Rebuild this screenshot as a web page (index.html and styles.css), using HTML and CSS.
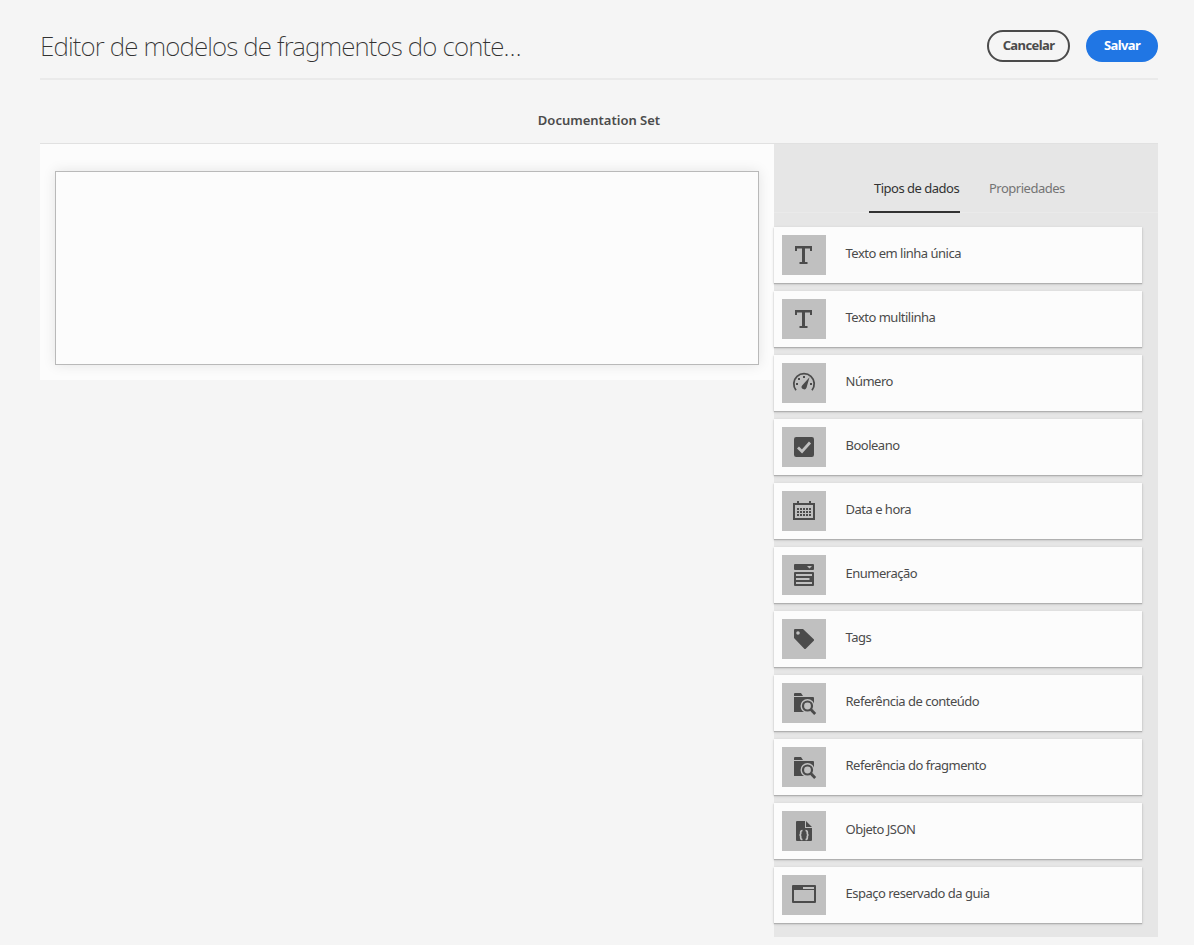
FILE: index.html
```html
<!DOCTYPE html>
<html lang="pt-BR">
<head>
<meta charset="utf-8">
<title>Editor de modelos de fragmentos do conteúdo</title>
<link rel="stylesheet" href="styles.css">
</head>
<body>
<header class="header">
  <h1 class="title">Editor de modelos de fragmentos do conte…</h1>
  <div class="actions">
    <button class="button cancel"><span>Cancelar</span></button>
    <button class="button save"><span>Salvar</span></button>
  </div>
</header>
<h2 class="model-name"><span>Documentation Set</span></h2>
<main class="editor">
  <section class="canvas"><div class="drop-zone"></div></section>
  <aside class="panel">
    <nav class="tabs">
      <a class="tab active">Tipos de dados</a>
      <a class="tab">Propriedades</a>
    </nav>
    <ul class="types">
      <li class="type"><span class="tile"><svg viewBox="0 0 44 40"><path d="M13 11h17v5h-2v-2.600h-5v13.600h2.500v2h-8v-2h2.500v-13.600h-5v2.600h-2z"/></svg></span><span class="label">Texto em linha única</span></li>
      <li class="type"><span class="tile"><svg viewBox="0 0 44 40"><path d="M13 11h17v5h-2v-2.600h-5v13.600h2.500v2h-8v-2h2.500v-13.600h-5v2.600h-2z"/></svg></span><span class="label">Texto multilinha</span></li>
      <li class="type"><span class="tile"><svg viewBox="0 0 44 40"><path class="line" d="M14 27.200A10.200 10.200 0 1 1 30 27.200"/><path d="M27.500 14.200l-3 10.500a2.500 2.500 0 1 1-4.400-2.300zM14 20h2v2h-2zM16 15h2v2h-2zM21 13h2v2h-2zM28 20h2v2h-2z"/></svg></span><span class="label">Número</span></li>
      <li class="type"><span class="tile"><svg viewBox="0 0 44 40"><rect x="12" y="10" width="20" height="20" rx="2.200"/><path class="check" d="M16 20.500l4 4 8-9"/></svg></span><span class="label">Booleano</span></li>
      <li class="type"><span class="tile"><svg viewBox="0 0 44 40"><path fill-rule="evenodd" d="M11 12h4v-2h2v2h10v-2h2v2h4v17h-22zM13 14v13h18v-13z"/><path d="M18 17h2v2h-2zM21 17h2v2h-2zM24 17h2v2h-2zM27 17h2v2h-2zM15 17h2v2h-2zM15 20h2v2h-2zM18 20h2v2h-2zM21 20h2v2h-2zM24 20h2v2h-2zM27 20h2v2h-2zM15 23h2v2h-2zM18 23h2v2h-2zM21 23h2v2h-2zM24 23h2v2h-2zM27 23h2v2h-2z"/></svg></span><span class="label">Data e hora</span></li>
      <li class="type"><span class="tile"><svg viewBox="0 0 44 40"><rect x="12" y="9" width="20" height="6" rx="1"/><rect x="12" y="17" width="20" height="14" rx="1"/><path class="cut" d="M25 11h5l-2.500 2.500zM14 19h16v2h-16zM14 23h13.500v2h-13.500zM14 27h16v2h-16z"/></svg></span><span class="label">Enumeração</span></li>
      <li class="type"><span class="tile"><svg viewBox="0 0 44 40"><path fill-rule="evenodd" d="M13 10h8l11 10.500v1L23.500 30h-1L12 19v-8a1 1 0 0 1 1-1zM16 12.200a1.800 1.800 0 1 0 0 3.600 1.800 1.800 0 0 0 0-3.600z"/></svg></span><span class="label">Tags</span></li>
      <li class="type"><span class="tile"><svg viewBox="0 0 44 40"><path d="M12 11q0-1 1-1h6l2 3h-9zM12 14h19q1 0 1 1v14h-20z"/><circle class="halo" cx="25.500" cy="23" r="5"/><path class="halo" d="M29 26.500l4.200 4.200"/><circle class="lens" cx="25.500" cy="23" r="4.500"/><path class="handle" d="M28.800 26.400l4.400 4.500"/></svg></span><span class="label">Referência de conteúdo</span></li>
      <li class="type"><span class="tile"><svg viewBox="0 0 44 40"><path d="M12 11q0-1 1-1h6l2 3h-9zM12 14h19q1 0 1 1v14h-20z"/><circle class="halo" cx="25.500" cy="23" r="5"/><path class="halo" d="M29 26.500l4.200 4.200"/><circle class="lens" cx="25.500" cy="23" r="4.500"/><path class="handle" d="M28.800 26.400l4.400 4.500"/></svg></span><span class="label">Referência do fragmento</span></li>
      <li class="type"><span class="tile"><svg viewBox="0 0 44 40"><path d="M15 10h8v7h7v12q0 1-1 1h-14q-1 0-1-1v-18q0-1 1-1zM24 10l6 6h-6z"/><path class="brace" d="M20.500 19.500q-1.800 0-1.800 1.700v1.300q0 1.500-1.300 1.500 1.300 0 1.300 1.500v1.300q0 1.700 1.800 1.700M23.500 19.500q1.800 0 1.800 1.700v1.300q0 1.500 1.300 1.500-1.300 0-1.300 1.500v1.300q0 1.700-1.800 1.700"/></svg></span><span class="label">Objeto JSON</span></li>
      <li class="type"><span class="tile"><svg viewBox="0 0 44 40"><path fill-rule="evenodd" d="M11 10h22q1 0 1 1v16q0 1-1 1h-22q-1 0-1-1v-16q0-1 1-1zM12 15v11h20v-11zM21 12v2h11v-2z"/></svg></span><span class="label">Espaço reservado da guia</span></li>
    </ul>
  </aside>
</main>
</body>
</html>
```
FILE: styles.css
```css
* { box-sizing: border-box; }
body {
  margin: 0;
  padding: 0 36px 0 40px;
  height: 945px;
  overflow: hidden;
  background: #f5f5f5;
  color: #4b4b4b;
  font-family: "Noto Sans", "Open Sans", sans-serif;
  font-size: 13px;
}
.header {
  display: flex;
  justify-content: space-between;
  align-items: flex-start;
  height: 80px;
  border-bottom: 2px solid #eaeaea;
}
.title {
  margin: 0;
  padding-top: 27px;
  font-size: 26px;
  line-height: 38px;
  font-weight: 200;
  letter-spacing: -0.85px;
  color: #323232;
  white-space: nowrap;
}
.actions { display: flex; gap: 16px; padding-top: 30px; }
.button {
  height: 32px;
  padding: 0 0 2px;
  border: 0;
  border-radius: 16px;
  font: bold 13px/26px "Noto Sans", sans-serif;
  letter-spacing: -0.6px;
}
.cancel { width: 83px; border: 2px solid #4b4b4b; background: transparent; color: #4b4b4b; }
.save { width: 72px; background: #2076e4; color: #fff; }
.model-name {
  margin: 0;
  height: 64px;
  padding-top: 30px;
  border-bottom: 1px solid #e1e1e1;
  text-align: center;
  font-size: 13px;
  line-height: 20px;
  font-weight: 600;
}
.editor { display: flex; align-items: flex-start; }
.canvas { width: 734px; height: 236px; padding: 27px 15px 15px; background: #fcfcfc; }
.drop-zone { height: 194px; border: 1px solid #b9b9b9; box-shadow: 0 0 12px rgba(0,0,0,.1); }
.panel { width: 384px; height: 793px; background: #e6e6e6; }
.tabs {
  display: flex;
  gap: 24px;
  height: 69px;
  padding: 33px 0 0 95px;
  border-bottom: 1px solid #eaeaea;
  line-height: 22px;
}
.tab { height: 36px; padding: 0 0 0 5px; color: #747474; white-space: nowrap; letter-spacing: -0.5px; }
.active { width: 91px; color: #323232; border-bottom: 2px solid #323232; }
.types { display: flex; flex-direction: column; gap: 8px; margin: 0; padding: 14px 16px 0 0; list-style: none; }
.type {
  display: flex;
  height: 56px;
  padding: 8px;
  background: #fcfcfc;
  box-shadow: 0 1px 1px #b0b0b0, 0 1px 3px rgba(0,0,0,.15);
}
.tile { width: 44px; height: 40px; background: #c0c0c0; }
.tile svg { display: block; width: 44px; height: 40px; fill: #4b4b4b; }
.label { padding-left: 19.5px; line-height: 36px; letter-spacing: -0.5px; white-space: nowrap; }
.tile .line { fill: none; stroke: #4b4b4b; stroke-width: 1.8; }
.tile .check { fill: none; stroke: #c0c0c0; stroke-width: 2.8; }
.tile .cut { fill: #c0c0c0; }
.tile .halo { fill: #c0c0c0; stroke: #c0c0c0; stroke-width: 4; }
.tile .lens { fill: #c0c0c0; stroke: #4b4b4b; stroke-width: 2.2; }
.tile .handle { fill: none; stroke: #4b4b4b; stroke-width: 2.8; }
.tile .brace { fill: none; stroke: #c0c0c0; stroke-width: 1.7; }
```
